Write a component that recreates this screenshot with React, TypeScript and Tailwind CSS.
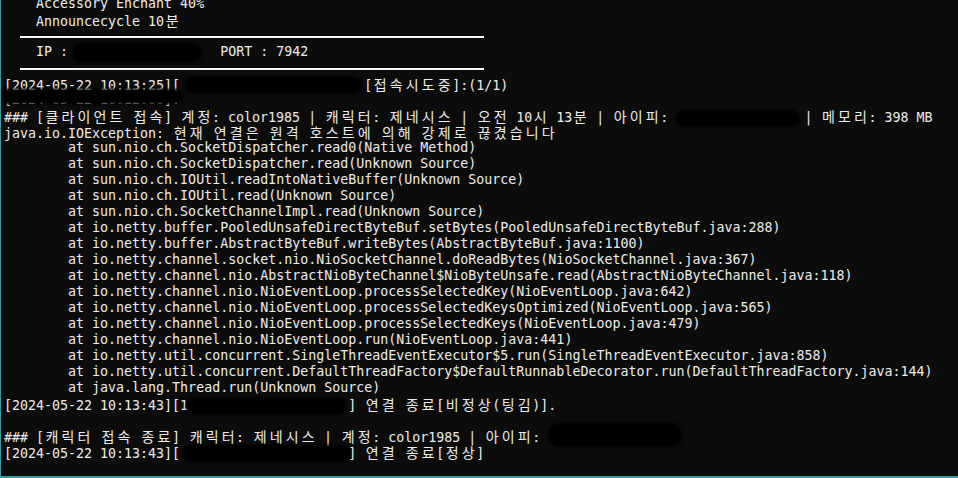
const HANGUL = /([\u1100-\u11ff\u3130-\u318f\uac00-\ud7a3])/;

// Hangul is double width in the console: one 16px cell per glyph
function ConsoleText({ text }: { text: string }) {
  const parts = text.split(HANGUL);
  return (
    <>
      {parts.map((p, i) =>
        i % 2 === 1 ? (
          <span
            key={i}
            className="inline-block w-4 text-center font-['Noto_Sans_CJK_KR',sans-serif] text-[14px]"
          >
            {p}
          </span>
        ) : (
          <span key={i}>{p}</span>
        )
      )}
    </>
  );
}

type Line = {
  text?: string;
  rule?: boolean;
  blobs?: string[];
};

const pad = (n: number) => ' '.repeat(n);

const stack = [
  'sun.nio.ch.SocketDispatcher.read0(Native Method)',
  'sun.nio.ch.SocketDispatcher.read(Unknown Source)',
  'sun.nio.ch.IOUtil.readIntoNativeBuffer(Unknown Source)',
  'sun.nio.ch.IOUtil.read(Unknown Source)',
  'sun.nio.ch.SocketChannelImpl.read(Unknown Source)',
  'io.netty.buffer.PooledUnsafeDirectByteBuf.setBytes(PooledUnsafeDirectByteBuf.java:288)',
  'io.netty.buffer.AbstractByteBuf.writeBytes(AbstractByteBuf.java:1100)',
  'io.netty.channel.socket.nio.NioSocketChannel.doReadBytes(NioSocketChannel.java:367)',
  'io.netty.channel.nio.AbstractNioByteChannel$NioByteUnsafe.read(AbstractNioByteChannel.java:118)',
  'io.netty.channel.nio.NioEventLoop.processSelectedKey(NioEventLoop.java:642)',
  'io.netty.channel.nio.NioEventLoop.processSelectedKeysOptimized(NioEventLoop.java:565)',
  'io.netty.channel.nio.NioEventLoop.processSelectedKeys(NioEventLoop.java:479)',
  'io.netty.channel.nio.NioEventLoop.run(NioEventLoop.java:441)',
  'io.netty.util.concurrent.SingleThreadEventExecutor$5.run(SingleThreadEventExecutor.java:858)',
  'io.netty.util.concurrent.DefaultThreadFactory$DefaultRunnableDecorator.run(DefaultThreadFactory.java:144)',
  'java.lang.Thread.run(Unknown Source)',
];

const lines: Line[] = [
  { text: '    Accessory Enchant 40%' },
  { text: '    Announcecycle 10분' },
  { rule: true },
  {
    text: '    IP : ' + pad(18) + 'PORT : 7942',
    blobs: ['left-[68px] top-[-1px] w-[130px] h-[20px]'],
  },
  { rule: true },
  {
    text: '[2024-05-22 10:13:25][' + pad(23) + '[접속시도중]:(1/1)',
    blobs: ['left-[180px] top-[1px] w-[178px] h-[16px]'],
  },
  {
    // half-erased line, only the bottom of the glyphs shows
    text: '[2024-05-22 10:12:00].',
    blobs: ['left-[-6px] top-[-3px] w-[186px] h-[15px]'],
  },
  {
    text:
      '### [클라이언트 접속] 계정: color1985 | 캐릭터: 제네시스 | 오전 10시 13분 | 아이피: ' +
      pad(16) +
      '| 메모리: 398 MB',
    blobs: ['left-[672px] top-[2px] w-[124px] h-[17px]'],
  },
  { text: 'java.io.IOException: 현재 연결은 원격 호스트에 의해 강제로 끊겼습니다' },
  ...stack.map((s) => ({ text: '        at ' + s })),
  {
    text: '[2024-05-22 10:13:43][1' + pad(20) + '] 연결 종료[비정상(팅김)].',
    blobs: ['left-[182px] top-[2px] w-[160px] h-[17px]'],
  },
  { text: '' },
  {
    text: '### [캐릭터 접속 종료] 캐릭터: 제네시스 | 계정: color1985 | 아이피: ',
    blobs: ['left-[544px] top-[-5px] w-[134px] h-[24px]'],
  },
  {
    text: '[2024-05-22 10:13:43][' + pad(21) + '] 연결 종료[정상]',
    blobs: ['left-[178px] top-[1px] w-[168px] h-[17px]'],
  },
];

export default function App() {
  return (
    <div className="w-[958px] h-[478px] overflow-hidden bg-[#0c0c0c] border-l border-b-2 border-[#3a9aa6] text-[#ececec] font-['DejaVu_Sans_Mono',monospace] text-[13.3px] leading-4">
      <div className="-mt-1 pl-[3px]">
        {lines.map((line, i) =>
          line.rule ? (
            <div key={i} className="h-4 pt-2">
              <div className="ml-4 w-[464px] h-[2px] bg-[#f4f4f4]" />
            </div>
          ) : (
            <div key={i} className="relative h-4 whitespace-pre">
              <ConsoleText text={line.text ?? ''} />
              {line.blobs?.map((b, j) => (
                <span key={j} className={`absolute rounded-full bg-black blur-[1.5px] ${b}`} />
              ))}
            </div>
          )
        )}
      </div>
    </div>
  );
}
